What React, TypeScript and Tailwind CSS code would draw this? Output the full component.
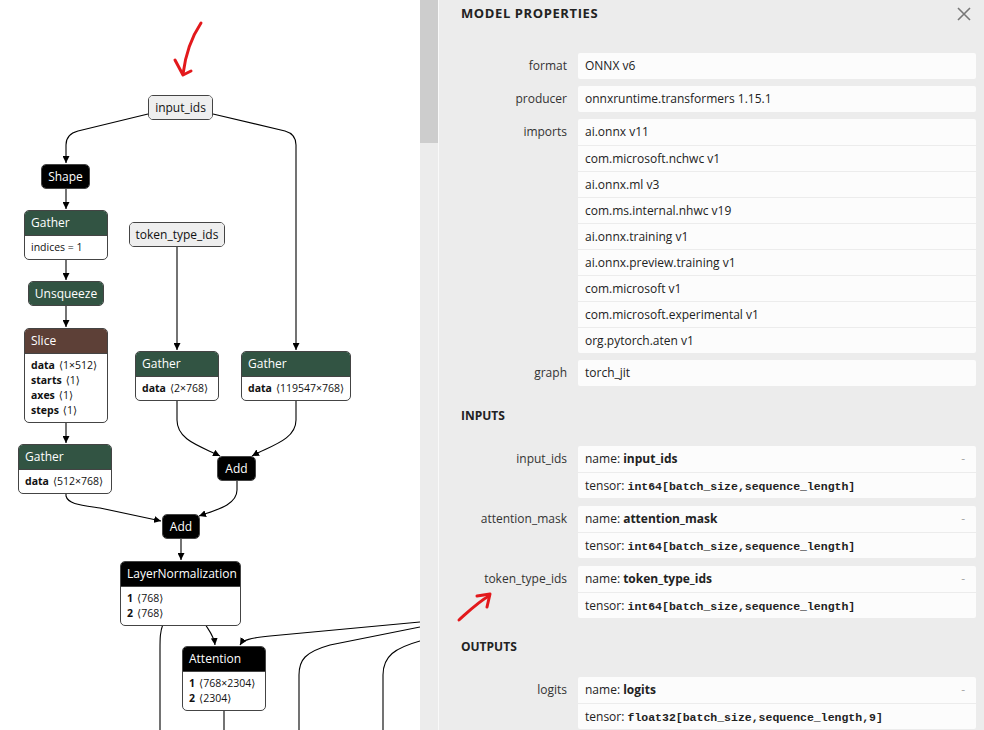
import React from 'react';

type Kind = 'input' | 'black' | 'green' | 'brown';

type GraphNode = {
  x: number;
  y: number;
  w: number;
  title: string;
  kind: Kind;
  rows?: [string, string][];
};

const nodes: GraphNode[] = [
  { x: 148, y: 95, w: 65, title: 'input_ids', kind: 'input' },
  { x: 41, y: 164, w: 49, title: 'Shape', kind: 'black' },
  { x: 24, y: 210, w: 84, title: 'Gather', kind: 'green', rows: [['', 'indices = 1']] },
  { x: 129, y: 222, w: 96, title: 'token_type_ids', kind: 'input' },
  { x: 28, y: 281, w: 76, title: 'Unsqueeze', kind: 'green' },
  {
    x: 24,
    y: 328,
    w: 84,
    title: 'Slice',
    kind: 'brown',
    rows: [
      ['data', '1×512'],
      ['starts', '1'],
      ['axes', '1'],
      ['steps', '1'],
    ],
  },
  { x: 135, y: 351, w: 84, title: 'Gather', kind: 'green', rows: [['data', '2×768']] },
  { x: 241, y: 351, w: 110, title: 'Gather', kind: 'green', rows: [['data', '119547×768']] },
  { x: 18, y: 444, w: 94, title: 'Gather', kind: 'green', rows: [['data', '512×768']] },
  { x: 217, y: 456, w: 39, title: 'Add', kind: 'black' },
  { x: 162, y: 514, w: 38, title: 'Add', kind: 'black' },
  {
    x: 120,
    y: 561,
    w: 121,
    title: 'LayerNormalization',
    kind: 'black',
    rows: [
      ['1', '768'],
      ['2', '768'],
    ],
  },
  {
    x: 182,
    y: 646,
    w: 84,
    title: 'Attention',
    kind: 'black',
    rows: [
      ['1', '768×2304'],
      ['2', '2304'],
    ],
  },
];

const headerStyle: Record<Kind, string> = {
  input: 'bg-[#eeeeee] text-[#111]',
  black: 'bg-black text-white',
  green: 'bg-[#325443] text-white',
  brown: 'bg-[#5d4037] text-white',
};

// edges: [path, hasArrow]
const edges: [string, boolean][] = [
  ['M148,114 L78,131 Q66,134 66,145 L66,163', true],
  ['M213,114 L285,131 Q296,134 296,145 L296,350', true],
  ['M66,188 L66,209', true],
  ['M66,258 L66,280', true],
  ['M66,306 L66,327', true],
  ['M66,422 L66,443', true],
  ['M177,247 L177,350', true],
  ['M177,399 L177,420 C177,440 200,446 220,456', true],
  ['M296,399 L296,420 C296,440 270,446 252,456', true],
  ['M237,481 L237,490 C237,505 216,510 199,516', true],
  ['M66,492 L66,496 C68,504 80,505 100,508 L161,521', true],
  ['M181,539 L181,560', true],
  ['M205,624 C210,632 214,636 215,645', true],
  ['M163,624 C160,632 160,638 160,650 L160,740', false],
  ['M224,710 L224,745', true],
  ['M420,622 L270,636 C250,638 243,640 240,645', true],
  ['M420,627 L330,645 C305,652 299,660 299,675 L299,740', false],
  ['M420,641 C395,648 383,656 383,675 L383,740', false],
];

function NodeBox({ n }: { n: GraphNode }) {
  const single = !n.rows;
  return (
    <div
      className="absolute rounded-[5px] border border-[#444] overflow-hidden bg-white text-[12px] leading-none"
      style={{ left: n.x, top: n.y, width: n.w }}
    >
      <div
        className={`${headerStyle[n.kind]} ${single ? 'h-[23px] justify-center' : 'h-[25px] pl-[6px] border-b border-[#444]'} flex items-center`}
      >
        {n.title}
      </div>
      {n.rows && (
        <div className="flex flex-col pl-[6px] pt-[4px] pb-[4px] text-[10.5px] text-[#111]">
          {n.rows.map(([b, r], i) => (
            <div key={i} className="h-[15px] flex items-center whitespace-nowrap">
              {b ? (
                <>
                  <span className="font-bold">{b}</span>
                  <span className="ml-[4px]">⟨{r}⟩</span>
                </>
              ) : (
                <span>{r}</span>
              )}
            </div>
          ))}
        </div>
      )}
    </div>
  );
}

function Graph() {
  return (
    <div className="relative w-[420px] h-[730px] bg-white overflow-hidden shrink-0">
      <svg className="absolute inset-0" width="420" height="730">
        <defs>
          <marker id="arr" viewBox="0 0 10 10" refX="10" refY="5" markerWidth="7" markerHeight="7" markerUnits="userSpaceOnUse" orient="auto">
            <path d="M0,0 L10,5 L0,10 z" fill="#000" />
          </marker>
        </defs>
        {edges.map(([d, arrow], i) => (
          <path key={i} d={d} fill="none" stroke="#000" strokeWidth="1.1" markerEnd={arrow ? 'url(#arr)' : undefined} />
        ))}
      </svg>
      {nodes.map((n, i) => (
        <NodeBox key={i} n={n} />
      ))}
    </div>
  );
}

function Label({ children }: { children: React.ReactNode }) {
  return <div className="text-right leading-[26px] text-[#333] whitespace-nowrap">{children}</div>;
}

function SimpleRow({ label, values }: { label: string; values: string[] }) {
  return (
    <div className="shrink-0 grid grid-cols-[106px_1fr] gap-x-[11px]">
      <Label>{label}</Label>
      <div className="bg-[#fcfcfc] rounded-[2px] flex flex-col">
        {values.map((v, i) => (
          <div key={i} className={`h-[26px] leading-[26px] px-[7px] ${i > 0 ? 'border-t border-[#ececec]' : ''}`}>
            {v}
          </div>
        ))}
      </div>
    </div>
  );
}

function TensorRow({ label, name, type }: { label: string; name: string; type: string }) {
  return (
    <div className="shrink-0 grid grid-cols-[106px_1fr] gap-x-[11px]">
      <Label>{label}</Label>
      <div className="bg-[#fcfcfc] rounded-[2px] flex flex-col">
        <div className="h-[26px] leading-[26px] px-[7px] flex justify-between">
          <span>
            name: <span className="font-bold">{name}</span>
          </span>
          <span className="text-[#aaa] pr-[4px]">-</span>
        </div>
        <div className="h-[26px] leading-[26px] px-[7px] border-t border-[#ececec]">
          tensor: <span className="font-['Liberation_Mono',monospace] font-bold text-[11.5px]">{type}</span>
        </div>
      </div>
    </div>
  );
}

const imports = [
  'ai.onnx v11',
  'com.microsoft.nchwc v1',
  'ai.onnx.ml v3',
  'com.ms.internal.nhwc v19',
  'ai.onnx.training v1',
  'ai.onnx.preview.training v1',
  'com.microsoft v1',
  'com.microsoft.experimental v1',
  'org.pytorch.aten v1',
];

function Panel() {
  return (
    <div className="flex-1 bg-[#ececec] pl-[22px] pr-[8px] text-[12px] text-[#222] flex flex-col gap-[7px] overflow-hidden">
      <div className="shrink-0 h-[28px] mb-[18px] flex items-center justify-between">
        <div className="font-bold text-[13px] tracking-[0.6px] text-[#222]">MODEL PROPERTIES</div>
        <svg width="14" height="14" viewBox="0 0 14 14" className="mr-[5px]">
          <path d="M1,1 L13,13 M13,1 L1,13" stroke="#777" strokeWidth="1.6" />
        </svg>
      </div>
      <SimpleRow label="format" values={['ONNX v6']} />
      <SimpleRow label="producer" values={['onnxruntime.transformers 1.15.1']} />
      <SimpleRow label="imports" values={imports} />
      <SimpleRow label="graph" values={['torch_jit']} />
      <div className="shrink-0 h-[20px] leading-[20px] mt-[13px] mb-[13px] font-bold text-[12px] text-[#222]">INPUTS</div>
      <div className="shrink-0 flex flex-col gap-[8px]">
        <TensorRow label="input_ids" name="input_ids" type="int64[batch_size,sequence_length]" />
        <TensorRow label="attention_mask" name="attention_mask" type="int64[batch_size,sequence_length]" />
        <TensorRow label="token_type_ids" name="token_type_ids" type="int64[batch_size,sequence_length]" />
      </div>
      <div className="shrink-0 h-[20px] leading-[20px] mt-[12px] mb-[13px] font-bold text-[12px] text-[#222]">OUTPUTS</div>
      <TensorRow label="logits" name="logits" type="float32[batch_size,sequence_length,9]" />
    </div>
  );
}

export default function App() {
  return (
    <div className="relative flex w-[984px] h-[730px] overflow-hidden font-['Open_Sans','DejaVu_Sans',sans-serif]">
      <Graph />
      <div className="w-[18px] shrink-0 bg-[#ececec]">
        <div className="h-[143px] bg-[#cdcdcd]" />
      </div>
      <div className="w-px shrink-0 bg-[#f9f9f9]" />
      <Panel />
      {/* red hand-drawn annotations */}
      <svg className="absolute inset-0 pointer-events-none" width="984" height="730">
        <g fill="none" stroke="#e3191c" strokeWidth="3" strokeLinecap="round" strokeLinejoin="round">
          <path d="M201,23 C195,32 186,50 183,74" />
          <path d="M175,60 L183,75 L191,71" />
          <path d="M459,620 C468,612 478,602 489,596" />
          <path d="M477,596 L490,594 L487,607" />
        </g>
      </svg>
    </div>
  );
}
